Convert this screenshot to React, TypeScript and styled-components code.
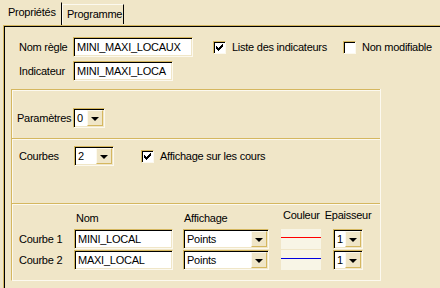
import React from 'react';
import styled, { createGlobalStyle } from 'styled-components';

// palette taken from the dialog
const BG = '#f0e6c8';
const GOLD = '#d5b75f';
const LIGHT = '#fcf9ef';
const SWATCH = '#f8f5e6';

const GlobalStyle = createGlobalStyle`
  html, body {
    margin: 0;
    padding: 0;
    background: ${BG};
  }
  body {
    font-family: "Liberation Sans", Arial, sans-serif;
    font-size: 11px;
    letter-spacing: -0.25px;
    color: #000;
  }
`;

const Window = styled.div`
  width: 440px;
  height: 288px;
  overflow: hidden;
  background: ${BG};
`;

// Tabs
const TabStrip = styled.div`
  display: flex;
  align-items: flex-end;
  height: 25px;
`;

const Tab = styled.div<{ $active?: boolean }>`
  box-sizing: border-box;
  width: 62px;
  height: ${({ $active }) => ($active ? '23px' : '20px')};
  padding-left: ${({ $active }) => ($active ? '7px' : '4px')};
  padding-top: 3px;
  margin-bottom: ${({ $active }) => ($active ? '0' : '1px')};
  border-right: 1px solid #000;
  border-top: 1px solid ${({ $active }) => ($active ? 'transparent' : LIGHT)};
  border-left: 1px solid ${({ $active }) => ($active ? 'transparent' : LIGHT)};
  line-height: 13px;
  white-space: nowrap;
`;

// Sunken tab pane
const Pane = styled.div`
  margin-left: 3px;
  height: 270px;
  border-top: 1px solid ${GOLD};
  border-left: 1px solid ${GOLD};
  box-shadow: inset 1px 1px 0 #000;
`;

const TopSection = styled.div`
  display: grid;
  grid-template-columns: 54px auto;
  row-gap: 4px;
  padding: 11px 0 0 15px;
  align-items: center;
`;

const Label = styled.span<{ $width?: number }>`
  white-space: nowrap;
  line-height: 13px;
  ${({ $width }) => ($width ? `width: ${$width}px; flex: none;` : '')}
`;

const FieldRow = styled.div`
  display: flex;
  align-items: center;
`;

const Sunken = styled.div<{ $width: number }>`
  box-sizing: border-box;
  width: ${({ $width }) => $width}px;
  height: 20px;
  flex: none;
  background: #fff;
  border-top: 1px solid ${GOLD};
  border-left: 1px solid ${GOLD};
  border-right: 1px solid ${LIGHT};
  border-bottom: 1px solid ${LIGHT};
  box-shadow: inset 1px 1px 0 #000, inset -1px -1px 0 ${BG};
  display: flex;
  align-items: center;
`;

const FieldText = styled.span`
  padding-left: 3px;
  line-height: 13px;
  white-space: nowrap;
  flex: 1;
`;

const DropButton = styled.div`
  box-sizing: border-box;
  width: 16px;
  height: 16px;
  margin-right: 1px;
  background: ${BG};
  border-top: 1px solid ${LIGHT};
  border-left: 1px solid ${LIGHT};
  border-right: 1px solid ${GOLD};
  border-bottom: 1px solid ${GOLD};
  display: flex;
  align-items: center;
  justify-content: center;
  flex: none;

  &::after {
    content: '';
    border-left: 4px solid transparent;
    border-right: 4px solid transparent;
    border-top: 4px solid #000;
    margin-top: 1px;
  }
`;

const CheckWrap = styled.label<{ $ml: number }>`
  display: flex;
  align-items: center;
  gap: 6px;
  margin-left: ${({ $ml }) => $ml}px;
  white-space: nowrap;
  line-height: 13px;
`;

const CheckBox = styled.span`
  box-sizing: border-box;
  width: 13px;
  height: 13px;
  flex: none;
  background: #fff;
  border-top: 1px solid ${GOLD};
  border-left: 1px solid ${GOLD};
  border-right: 1px solid ${LIGHT};
  border-bottom: 1px solid ${LIGHT};
  box-shadow: inset 1px 1px 0 #000;
  display: flex;
  align-items: center;
  justify-content: center;

  svg {
    display: block;
    margin: 1px 0 0 1px;
  }
`;

// Etched frames
const FrameGroup = styled.div`
  box-sizing: border-box;
  width: 370px;
  margin: 8px 0 0 7px;
  border-left: 1px solid ${GOLD};
  border-right: 1px solid ${LIGHT};
  border-bottom: 1px solid ${LIGHT};
`;

const Frame = styled.div<{ $h: number; $pt: number; $pl: number }>`
  box-sizing: border-box;
  height: ${({ $h }) => $h}px;
  padding: ${({ $pt }) => $pt}px 0 0 ${({ $pl }) => $pl}px;
  border-top: 1px solid ${GOLD};
  box-shadow: inset 0 1px 0 ${LIGHT}, inset 1px 0 0 ${LIGHT};
`;

const CurveGrid = styled.div`
  display: grid;
  grid-template-columns: 55px 109px 98px 52px 30px;
  row-gap: 1px;
  align-items: center;
`;

const Head = styled.span<{ $center?: boolean; $raise?: boolean; $indent?: number }>`
  line-height: 13px;
  white-space: nowrap;
  justify-self: ${({ $center }) => ($center ? 'center' : 'start')};
  padding-left: ${({ $indent }) => $indent ?? 0}px;
  align-self: end;
  margin-bottom: ${({ $raise }) => ($raise ? '6px' : '3px')};
`;

const Swatch = styled.div<{ $color: string }>`
  box-sizing: border-box;
  width: 40px;
  height: 20px;
  padding-top: 8px;
  background: ${SWATCH};

  &::after {
    content: '';
    display: block;
    height: 1px;
    background: ${({ $color }) => $color};
  }
`;

const Check = () => (
  <svg width="8" height="8" viewBox="0 0 8 8" shapeRendering="crispEdges">
    <path d="M0 2h1v1h1v1h1v-1h1v-1h1v-1h1v-1h1v3h-1v1h-1v1h-1v1h-1v1h-1v-1h-1v-1h-1z" fill="#000" />
  </svg>
);

const Combo: React.FC<{ value: string; width: number }> = ({ value, width }) => (
  <Sunken $width={width}>
    <FieldText>{value}</FieldText>
    <DropButton />
  </Sunken>
);

const curves = [
  { name: 'Courbe 1', id: 'MINI_LOCAL', color: '#ff0000' },
  { name: 'Courbe 2', id: 'MAXI_LOCAL', color: '#0000e0' },
];

const App: React.FC = () => {
  return (
    <Window>
      <GlobalStyle />
      <TabStrip>
        <Tab $active>Propriétés</Tab>
        <Tab>Programme</Tab>
      </TabStrip>

      <Pane>
        <TopSection>
          <Label>Nom règle</Label>
          <FieldRow>
            <Sunken $width={120}>
              <FieldText>MINI_MAXI_LOCAUX</FieldText>
            </Sunken>
            <CheckWrap $ml={20}>
              <CheckBox>
                <Check />
              </CheckBox>
              Liste des indicateurs
            </CheckWrap>
            <CheckWrap $ml={16}>
              <CheckBox />
              Non modifiable
            </CheckWrap>
          </FieldRow>
          <Label>Indicateur</Label>
          <FieldRow>
            <Sunken $width={100}>
              <FieldText>MINI_MAXI_LOCA</FieldText>
            </Sunken>
          </FieldRow>
        </TopSection>

        <FrameGroup>
          <Frame $h={49} $pt={18} $pl={5}>
            <FieldRow>
              <Label $width={56}>Paramètres</Label>
              <Combo value="0" width={32} />
            </FieldRow>
          </Frame>

          <Frame $h={65} $pt={7} $pl={7}>
            <FieldRow>
              <Label $width={55}>Courbes</Label>
              <Combo value="2" width={40} />
              <CheckWrap $ml={27}>
                <CheckBox>
                  <Check />
                </CheckBox>
                Affichage sur les cours
              </CheckWrap>
            </FieldRow>
          </Frame>

          <Frame $h={77} $pt={5} $pl={7}>
            <CurveGrid>
              <span />
              <Head $indent={2}>Nom</Head>
              <Head $indent={1}>Affichage</Head>
              <Head $raise $indent={2}>
                Couleur
              </Head>
              <Head $center $raise>
                Epaisseur
              </Head>
              {curves.map((c) => (
                <React.Fragment key={c.name}>
                  <Label>{c.name}</Label>
                  <Sunken $width={99}>
                    <FieldText>{c.id}</FieldText>
                  </Sunken>
                  <Combo value="Points" width={86} />
                  <Swatch $color={c.color} />
                  <Combo value="1" width={30} />
                </React.Fragment>
              ))}
            </CurveGrid>
          </Frame>
        </FrameGroup>
      </Pane>
    </Window>
  );
};

export default App;
